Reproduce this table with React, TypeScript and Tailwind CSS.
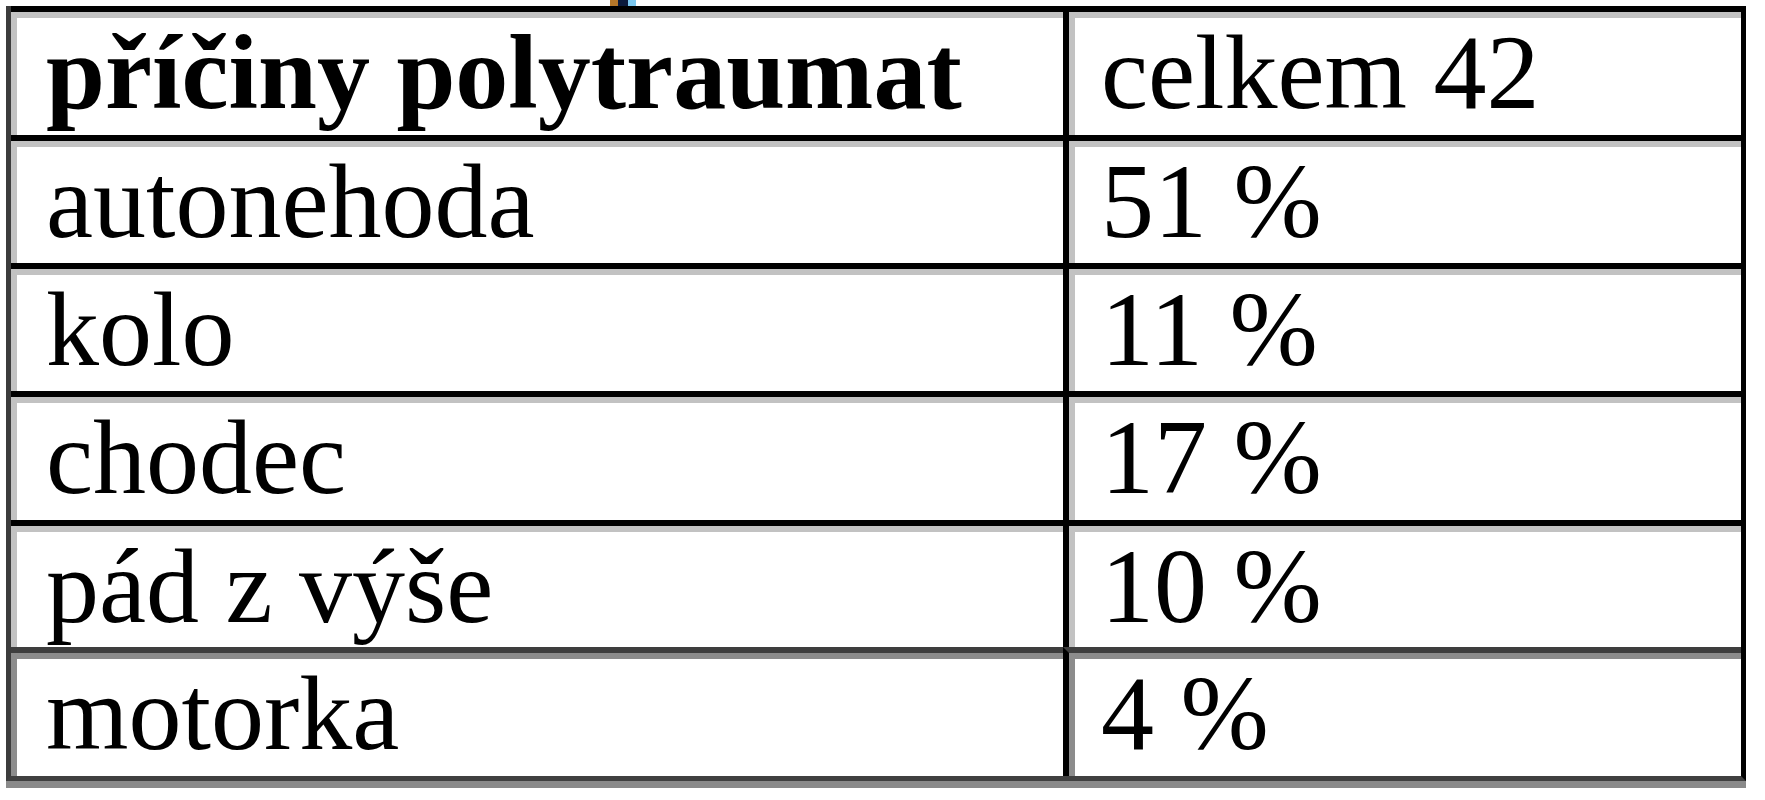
import React from "react";

const rows: { a: string; b: string; h: string; bold?: boolean; last?: boolean }[] = [
  { a: "příčiny polytraumat", b: "celkem 42", h: "h-[129px]", bold: true },
  { a: "autonehoda", b: "51 %", h: "h-[128px]" },
  { a: "kolo", b: "11 %", h: "h-[128px]" },
  { a: "chodec", b: "17 %", h: "h-[129px]" },
  { a: "pád z výše", b: "10 %", h: "h-[127px]" },
  { a: "motorka", b: "4 %", h: "h-[129px]", last: true },
];

export default function App() {
  return (
    <div
      className="w-[1765px] h-[800px] bg-white overflow-hidden text-black"
      style={{ fontFamily: '"Liberation Serif", "Times New Roman", serif' }}
    >
      <div className="h-[6px] flex">
        <div className="ml-[610px] w-[8px] h-[6px] bg-[#b5772a]" />
        <div className="w-[10px] h-[6px] bg-[#0b1a3c]" />
        <div className="w-[8px] h-[6px] bg-[#7cc8f0]" />
      </div>
      <div className="ml-[6px] w-[1740px] border-l-[5px] border-l-[#3c3c3c] border-r-[5px] border-r-black border-b-[5px] border-b-[#404040] shadow-[0_7px_0_#8a8a8a]">
        {rows.map((r, i) => (
          <div key={i} className={`grid grid-cols-[1052px_1fr] ${r.h}`}>
            <div
              className={`border-t-[6px] pl-[35px] pt-[8px] text-[106px] leading-[106px] whitespace-nowrap ${
                r.last
                  ? "border-t-[#3e3e3e] shadow-[inset_6px_6px_0_#8c8c8c]"
                  : "border-t-black shadow-[inset_6px_6px_0_#c2c2c2]"
              } ${r.bold ? "font-bold" : "font-normal"}`}
            >
              {r.a}
            </div>
            <div
              className={`border-t-[6px] border-l-[6px] border-l-black pl-[32px] pt-[8px] text-[106px] leading-[106px] whitespace-nowrap ${
                r.last
                  ? "border-t-[#3e3e3e] shadow-[inset_6px_6px_0_#8c8c8c]"
                  : "border-t-black shadow-[inset_6px_6px_0_#c2c2c2]"
              }`}
            >
              {r.b}
            </div>
          </div>
        ))}
      </div>
    </div>
  );
}
